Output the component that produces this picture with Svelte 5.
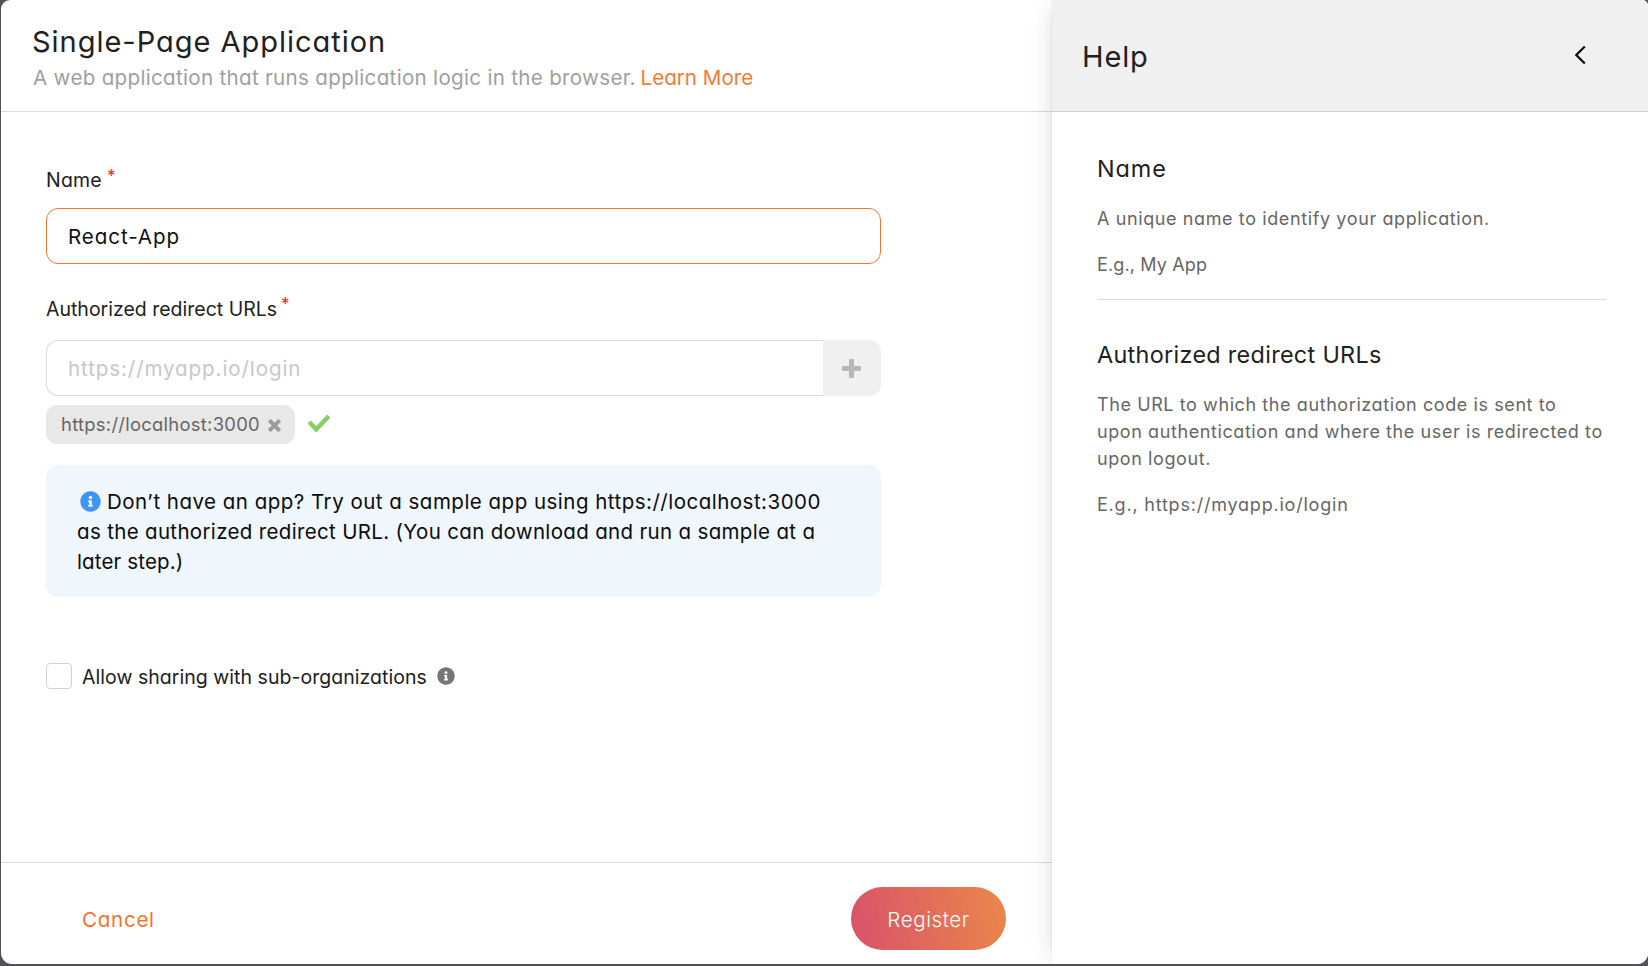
<script>
  let name = $state('React-App');
  let url = $state('');
</script>

{#snippet info(cls)}
  <svg class={cls} viewBox="0 0 512 512" aria-hidden="true">
    <path fill="currentColor" d="M256 8C119 8 8 119 8 256s111 248 248 248 248-111 248-248S393 8 256 8zm0 110c23.200 0 42 18.800 42 42s-18.800 42-42 42-42-18.800-42-42 18.800-42 42-42zm56 254c0 6.600-5.400 12-12 12h-88c-6.600 0-12-5.400-12-12v-24c0-6.600 5.400-12 12-12h12v-64h-12c-6.600 0-12-5.400-12-12v-24c0-6.600 5.400-12 12-12h64c6.600 0 12 5.400 12 12v100h12c6.600 0 12 5.400 12 12z" />
  </svg>
{/snippet}

<div class="backdrop">
  <div class="modal">
    <section class="wizard">
      <header class="head">
        <h1>Single-Page Application</h1>
        <p class="sub"><span>A web application that runs application logic in the browser.</span> <a href="#learn">Learn More</a></p>
      </header>

      <main class="form">
        <label class="label" for="name">Name<span class="req">*</span></label>
        <input id="name" class="field active" bind:value={name} />

        <label class="label second" for="url">Authorized redirect URLs<span class="req">*</span></label>
        <div class="group">
          <input id="url" class="field" placeholder="https://myapp.io/login" bind:value={url} />
          <button class="add" aria-label="Add">
            <svg width="19" height="19" viewBox="0 0 19 19"><path fill="#b8b8b8" d="M8 0h3q1 0 1 1v6h6q1 0 1 1v3q0 1-1 1h-6v6q0 1-1 1h-3q-1 0-1-1v-6h-6q-1 0-1-1v-3q0-1 1-1h6v-6q0-1 1-1z" /></svg>
          </button>
        </div>
        <div class="chips">
          <div class="chip">
            <span>https://localhost:3000</span>
            <svg width="13" height="13" viewBox="0 0 13 13"><path d="M2.700 2.700l7.600 7.600M10.300 2.700l-7.600 7.600" stroke="#9c9c9c" stroke-width="4" stroke-linecap="square" stroke-linejoin="round" /></svg>
          </div>
          <svg class="check" width="22" height="17" viewBox="0 65 512 382" preserveAspectRatio="none"><path fill="#87d068" d="M173.898 439.404l-166.400-166.400c-9.997-9.997-9.997-26.206 0-36.204l36.203-36.204c9.997-9.998 26.207-9.998 36.204 0L192 312.690 432.095 72.596c9.997-9.997 26.207-9.997 36.204 0l36.203 36.204c9.997 9.997 9.997 26.206 0 36.204l-294.400 294.401c-9.998 9.997-26.207 9.997-36.204-.001z" /></svg>
        </div>

        <div class="notice">
          <div>{@render info('i-blue')}<span class="n1">Don’t have an app? Try out a sample app using https://localhost:3000</span></div>
          <div class="n2">as the authorized redirect URL. (You can download and run a sample at a</div>
          <div class="n3">later step.)</div>
        </div>

        <div class="share">
          <span class="box"></span>
          <span class="share-text">Allow sharing with sub-organizations</span>
          {@render info('i-grey')}
        </div>
      </main>

      <footer class="foot">
        <button class="cancel">Cancel</button>
        <button class="register">Register</button>
      </footer>
    </section>

    <aside class="help">
      <header class="help-head">
        <h2>Help</h2>
        <svg width="13" height="20" viewBox="0 0 13 20"><path d="M10.800 1.500L2.300 10l8.500 8.500" fill="none" stroke="#111" stroke-width="2.300" /></svg>
      </header>
      <div class="help-body">
        <h3 class="hn">Name</h3>
        <p class="p1">A unique name to identify your application.</p>
        <p class="eg">E.g., My App</p>
        <hr />
        <h3 class="ha">Authorized redirect URLs</h3>
        <p class="p2">The URL to which the authorization code is sent to<br />upon authentication and where the user is redirected to<br />upon logout.</p>
        <p class="eg2">E.g., https://myapp.io/login</p>
      </div>
    </aside>
  </div>
</div>

<style>
  :global(body) { margin: 0; }
  * { box-sizing: border-box; }
  h1, h2, h3, p { margin: 0; font-weight: 400; }
  .backdrop {
    width: 1648px; height: 966px; overflow: hidden;
    padding: 0 0 2px 1px; background: #525254;
    font-family: Inter, 'Noto Sans', sans-serif; font-feature-settings: 'cv11';
    color: #212121; white-space: nowrap;
  }
  .modal { display: flex; height: 964px; border-radius: 9px 6px 11px 11px; overflow: hidden; background: #fff; }
  .wizard { width: 1051px; display: flex; flex-direction: column; }
  .head { height: 112px; padding: 24px 0 0 31px; border-bottom: 1px solid #d9dadb; }
  h1 { font-size: 29px; line-height: 36px; letter-spacing: 0.973px; }
  .sub { margin-top: 3px; padding-left: 1px; font-size: 20.600px; line-height: 30px; color: #9f9f9f; }
  .sub span { letter-spacing: 0.300px; }
  .sub a { color: #f47b32; text-decoration: none; margin-left: -1px; }

  .form { flex: 1; padding: 56px 0 0 45px; width: 880px; }
  .label { display: block; font-size: 19.500px; line-height: 24px; height: 24px; letter-spacing: 0.200px; }
  .label.second { margin-top: 32px; padding-top: 1px; letter-spacing: 0; }
  .req { color: #db2828; font-size: 17px; margin-left: 5px; position: relative; top: -5px; }
  .second .req { margin-left: 4px; top: -6px; }
  .field {
    display: block; width: 100%; height: 56px; margin-top: 16px; padding: 0 21px;
    border: 1px solid #d9dadb; border-radius: 12px; outline: 0; background: #fff;
    font: 400 20.600px Inter, 'Noto Sans', sans-serif; font-feature-settings: 'cv11';
    color: #111; letter-spacing: 0.880px;
  }
  .active { border-color: #f1762f; letter-spacing: 0.900px; }
  .field::placeholder { color: #c7c7c7; opacity: 1; }
  .group { display: flex; margin-top: 20px; }
  .group .field { flex: 1; margin: 0; border-right: 0; border-radius: 12px 0 0 12px; padding-top: 1px; }
  .add { width: 58px; height: 56px; padding: 1px 1px 0 0; border: 0; border-radius: 0 12px 12px 0; background: #f0f0f0; display: grid; place-items: center; }
  .chips { display: flex; margin-top: 9px; }
  .chip {
    display: flex; align-items: center; width: 249px; height: 39px; padding: 0 0 0 15px;
    border-radius: 11px; background: #e8e8e8; color: #666;
    font-size: 18.400px; letter-spacing: 0.280px;
  }
  .chip span { margin-top: -1px; }
  .chip svg { margin-left: 8px; margin-top: 1px; }
  .check { margin: 10px 0 0 13px; }
  .notice {
    height: 132px; margin-top: 21px; padding: 22px 0 0 31px; border-radius: 12px;
    background: #eff6fc; color: #0c0c0c; font-size: 20.500px; line-height: 30px;
  }
  .notice div:first-child { display: flex; align-items: center; }
  .n1 { letter-spacing: 0.490px; margin-left: 6px; }
  .n2 { letter-spacing: 0.334px; }
  .n3 { letter-spacing: 0.150px; }
  .notice :global(.i-blue) { width: 21px; height: 21px; margin-left: 3px; margin-top: -2px; color: #4094f7; }
  .share { display: flex; align-items: center; height: 26px; margin-top: 66px; font-size: 19.500px; }
  .box { width: 26px; height: 26px; border: 1px solid #d0d0d1; border-radius: 4px; }
  .share-text { margin-left: 10px; letter-spacing: 0.040px; padding-top: 1px; }
  .share :global(.i-grey) { width: 18px; height: 18px; margin-left: 10px; color: #767676; }

  .foot { display: flex; justify-content: space-between; height: 102px; padding: 24px 46px 0 61px; border-top: 1px solid #d9dadb; }
  button { font: 300 20.600px Inter, 'Noto Sans', sans-serif; font-feature-settings: 'cv11'; }
  .cancel { height: 65px; padding: 0 20px; border: 0; background: none; color: #f1752e; letter-spacing: 0.700px; font-weight: 400; }
  .register {
    width: 155px; height: 63px; padding: 2px 0 0; border: 0; border-radius: 32px; color: #fff;
    background: linear-gradient(77deg, #d95569 8%, #ea834c 92%); letter-spacing: 0.550px;
  }

  .help { flex: 1; background: #fff; box-shadow: -10px 0 20px -10px rgba(34, 36, 38, 0.170), 0 0 0 1px rgba(34, 36, 38, 0.030); position: relative; }
  .help-head { display: flex; justify-content: space-between; height: 112px; padding: 39px 61px 0 30px; background: #f0f0f0; border-bottom: 1px solid #d0d0d0; }
  h2 { font-size: 29px; line-height: 36px; letter-spacing: 0.836px; }
  .help-head svg { margin-top: 6px; }
  .help-body { padding: 42px 42px 0 45px; color: #666; }
  h3 { color: #212121; font-size: 23.400px; line-height: 30px; }
  .hn { letter-spacing: 0.900px; }
  .ha { letter-spacing: 0.313px; }
  p { font-size: 18px; line-height: 27px; }
  .p1 { margin-top: 21px; letter-spacing: 0.610px; }
  .eg { margin-top: 19px; letter-spacing: 0.141px; }
  hr { margin: 21px 0 0; border: 0; height: 1px; background: #d9dadb; }
  .ha { margin-top: 40px; }
  .p2 { margin-top: 21px; letter-spacing: 0.590px; }
  .eg2 { margin-top: 19px; letter-spacing: 0.790px; }
</style>
